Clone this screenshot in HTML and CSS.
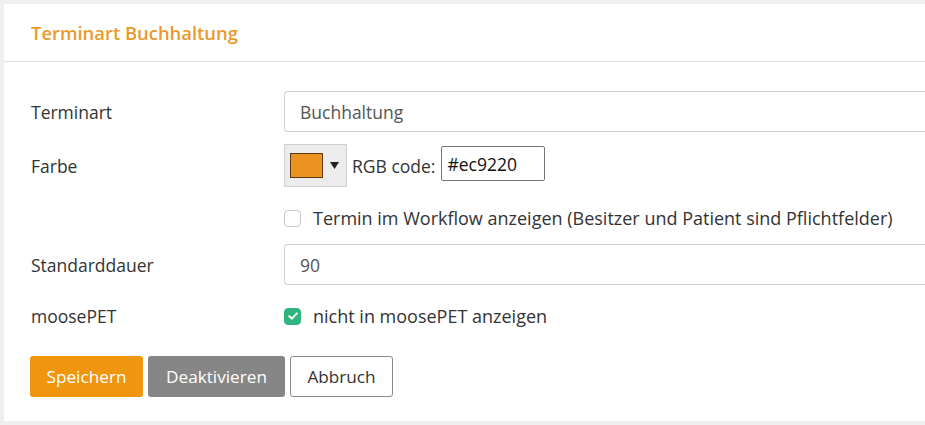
FILE: index.html
```html
<!DOCTYPE html>
<html lang="de">
<head>
<meta charset="utf-8">
<title>Terminart Buchhaltung</title>
<link rel="stylesheet" href="styles.css">
</head>
<body>
<div class="panel">
  <div class="panel-head">
    <h1 class="title">Terminart Buchhaltung</h1>
  </div>
  <div class="panel-body">
    <div class="row row-input">
      <div class="label">Terminart</div>
      <div class="control"><div class="field">Buchhaltung</div></div>
    </div>
    <div class="row row-color">
      <div class="label">Farbe</div>
      <div class="control color-control">
        <div class="picker">
          <span class="swatch"></span>
          <svg class="arrow" width="9" height="7" viewBox="0 0 9 7"><path d="M0 0H9L4.5 7Z" fill="#222"/></svg>
        </div>
        <span class="rgb-label">RGB code:</span>
        <div class="rgb-input">#ec9220</div>
      </div>
    </div>
    <div class="row row-check">
      <div class="label"></div>
      <div class="control check-control">
        <span class="checkbox"></span>
        <span class="check-text">Termin im Workflow anzeigen (Besitzer und Patient sind Pflichtfelder)</span>
      </div>
    </div>
    <div class="row row-input2">
      <div class="label">Standarddauer</div>
      <div class="control"><div class="field">90</div></div>
    </div>
    <div class="row row-check2">
      <div class="label">moosePET</div>
      <div class="control check-control">
        <span class="checkbox checked">
          <svg width="10" height="8" viewBox="0 0 10 8"><path d="M1.2 4.2L3.8 6.6L8.8 1.4" fill="none" stroke="#fff" stroke-width="2" stroke-linecap="round" stroke-linejoin="round"/></svg>
        </span>
        <span class="check-text">nicht in moosePET anzeigen</span>
      </div>
    </div>
    <div class="buttons">
      <button class="btn btn-primary">Speichern</button>
      <button class="btn btn-grey">Deaktivieren</button>
      <button class="btn btn-default">Abbruch</button>
    </div>
  </div>
</div>
</body>
</html>
```
FILE: styles.css
```css
html, body {
  margin: 0;
  padding: 0;
}
body {
  background: #efefef;
  padding: 4px 0 4px 4px;
  font-family: "Open Sans", "Noto Sans", sans-serif;
  font-size: 17.5px;
  color: #333;
  height: 425px;
  box-sizing: border-box;
  overflow: hidden;
}
.panel {
  background: #fff;
  height: 417px;
}
.panel-head {
  height: 57px;
  border-bottom: 1px solid #e2e2e2;
  display: flex;
  align-items: center;
  padding-left: 27px;
}
.title {
  margin: 0;
  font-size: 18.4px;
  font-weight: 600;
  color: #e99a2a;
  line-height: 1;
  padding-top: 1px;
}
.panel-body {
  padding: 29px 0 0 27px;
}
.row {
  display: grid;
  grid-template-columns: 253px 1fr;
  align-items: center;
}
.label {
  color: #333;
}
.field {
  height: 41px;
  box-sizing: border-box;
  border: 1px solid #d0d0d0;
  border-right: none;
  border-radius: 4px 0 0 4px;
  padding: 0 15px;
  display: flex;
  align-items: center;
  color: #555;
}
.row-input { height: 41px; }
.row-color { margin-top: 12px; height: 43px; }
.color-control {
  display: flex;
  align-items: center;
}
.picker {
  width: 63px;
  height: 43px;
  box-sizing: border-box;
  background: #ececec;
  border: 1px solid #cfcfcf;
  display: flex;
  align-items: center;
  padding-left: 5px;
}
.swatch {
  width: 33px;
  height: 25px;
  box-sizing: border-box;
  border: 1px solid #5a3a10;
  background: #ec9220;
}
.arrow {
  margin-left: 7px;
}
.rgb-label {
  margin-left: 5px;
  color: #333;
}
.rgb-input {
  margin-left: 6px;
  width: 104px;
  height: 35px;
  box-sizing: border-box;
  border: 1px solid #767676;
  border-radius: 2px;
  display: flex;
  align-items: center;
  padding-left: 5px;
  color: #111;
  margin-top: -4px;
}
.row-check { margin-top: 19px; height: 24px; }
.check-control {
  display: flex;
  align-items: center;
}
.check-text {
  font-size: 18px;
}
.checkbox {
  width: 17px;
  height: 17px;
  box-sizing: border-box;
  border: 1px solid #c8c8c8;
  border-radius: 4px;
  background: #fff;
  display: flex;
  align-items: center;
  justify-content: center;
  margin-right: 12px;
}
.checkbox.checked {
  background: #2fb57f;
  border-color: #2fb57f;
}
.row-input2 { margin-top: 14px; height: 41px; }
.row-check2 { margin-top: 19px; height: 24px; }
.buttons {
  margin-top: 28px;
  margin-left: -1px;
  display: flex;
  gap: 5px;
}
.btn {
  height: 41px;
  font-family: inherit;
  font-size: 17.2px;
  border-radius: 3px;
  padding: 0 10px;
  border: 1px solid transparent;
  cursor: pointer;
}
.btn-primary {
  background: #f0960e;
  color: #fff;
  width: 113px;
}
.btn-grey {
  background: #868686;
  color: #fff;
  width: 137px;
}
.btn-default {
  background: #fff;
  color: #333;
  border-color: #8a8a8a;
  width: 103px;
}
```
